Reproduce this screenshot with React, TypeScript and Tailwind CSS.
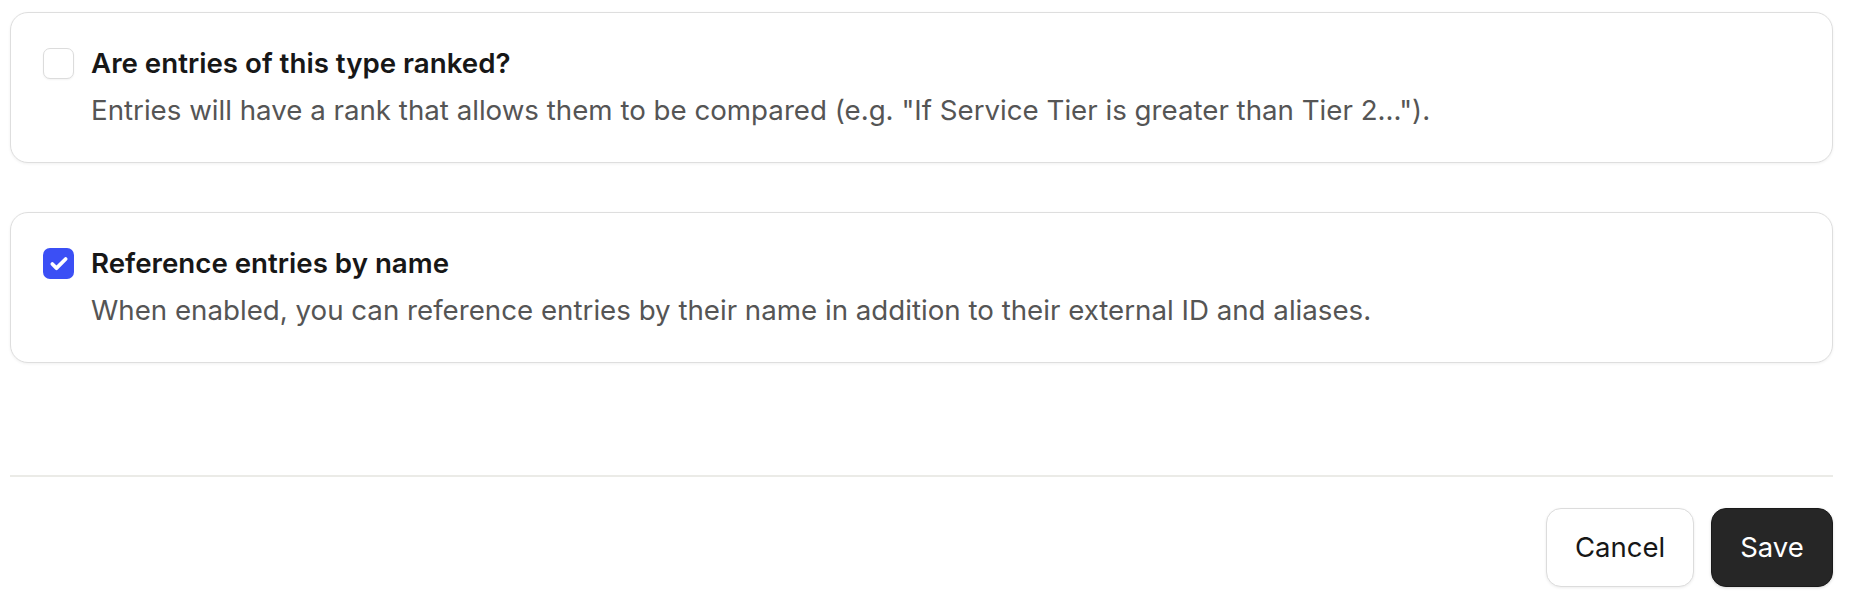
import { Check } from 'lucide-react';

type Option = {
  id: string;
  title: string;
  description: string;
  checked: boolean;
};

const options: Option[] = [
  {
    id: 'ranked',
    title: 'Are entries of this type ranked?',
    description:
      'Entries will have a rank that allows them to be compared (e.g. "If Service Tier is greater than Tier 2...").',
    checked: false,
  },
  {
    id: 'by-name',
    title: 'Reference entries by name',
    description:
      'When enabled, you can reference entries by their name in addition to their external ID and aliases.',
    checked: true,
  },
];

const OptionCard = ({ option }: { option: Option }) => (
  <div className="flex items-start gap-[17px] rounded-[18px] border border-[#dedede] bg-white pl-[32px] pr-8 pt-[30px] pb-[32px] shadow-[0_1px_3px_rgba(0,0,0,0.06)]">
    <div className="mt-[5px] shrink-0">
      {option.checked ? (
        <div className="flex h-[31px] w-[31px] items-center justify-center rounded-[7px] bg-[#3b4ff5]">
          <Check className="h-[20px] w-[20px] text-white" strokeWidth={4.5} />
        </div>
      ) : (
        <div className="h-[31px] w-[31px] rounded-[7px] border border-[#dcdcdc] bg-white shadow-[0_1px_2px_rgba(0,0,0,0.05)]" />
      )}
    </div>
    <div className="flex flex-col">
      <p className="text-[27.7px] font-semibold leading-[40px] text-[#171717]">{option.title}</p>
      <p className="mt-[7px] text-[27.7px] leading-[40px] text-[#555555]">{option.description}</p>
    </div>
  </div>
);

export default function App() {
  return (
    <div
      className="min-h-[606px] bg-white pl-[10px] pr-[17px] pt-[12px]"
      style={{ fontFamily: 'Inter, "Noto Sans", sans-serif' }}
    >
      <div className="flex flex-col gap-[49px]">
        {options.map((option) => (
          <OptionCard key={option.id} option={option} />
        ))}
      </div>

      {/* footer */}
      <div className="mt-[112px] h-[2px] bg-[#ebebe7]" />
      <div className="mt-[31px] flex justify-end gap-[17px]">
        <button className="h-[79px] w-[148px] rounded-[15px] border border-[#dcdcdc] bg-white text-[27.5px] text-[#171717] shadow-[0_1px_3px_rgba(0,0,0,0.08)]">
          Cancel
        </button>
        <button className="h-[79px] w-[122px] rounded-[15px] border border-[#1a1a1a] bg-[#262626] text-[27.5px] text-white shadow-[0_1px_3px_rgba(0,0,0,0.15)]">
          Save
        </button>
      </div>
    </div>
  );
}
